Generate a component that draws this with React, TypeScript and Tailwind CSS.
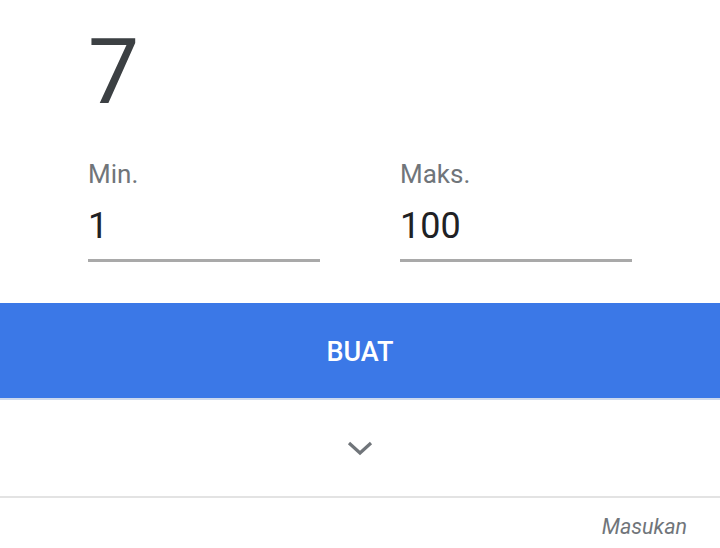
import React from "react";

function Field({ label, value }: { label: string; value: string }) {
  return (
    <div className="w-[232px] flex flex-col">
      <div className="text-[26px] leading-[28px] text-[#70757a]">{label}</div>
      <div className="mt-[20px] text-[36px] leading-[36px] text-[#202124] pb-[15px] border-b-[3px] border-[#a9a9a9]">
        {value}
      </div>
    </div>
  );
}

export default function App() {
  return (
    <div
      className="w-[720px] h-[548px] bg-white overflow-hidden flex flex-col"
      style={{ fontFamily: "Roboto, 'Noto Sans', sans-serif" }}
    >
      <div className="pl-[88px] pt-[27px]">
        <div className="text-[91px] leading-[91px] text-[#3c4043]">7</div>
        <div className="mt-[42px] flex gap-[80px]">
          <Field label="Min." value="1" />
          <Field label="Maks." value="100" />
        </div>
      </div>
      <div className="mt-[41px] h-[95px] bg-[#3b78e7] flex items-center justify-center pt-[3px]">
        <span className="text-white text-[27px] font-medium">BUAT</span>
      </div>
      <div className="h-[2px] bg-[#cdd9ee]" />
      <div className="h-[96px] flex items-center justify-center">
        <svg width="28" height="18" viewBox="0 0 28 18">
          <path d="M3 4 L14 14 L25 4" fill="none" stroke="#70757a" strokeWidth="3.2" />
        </svg>
      </div>
      <div className="h-[2px] bg-[#e3e3e3]" />
      <div className="flex justify-end pr-[33px] pt-[17px]">
        <span className="text-[21.5px] leading-[24px] italic text-[#70757a]">Masukan</span>
      </div>
    </div>
  );
}
